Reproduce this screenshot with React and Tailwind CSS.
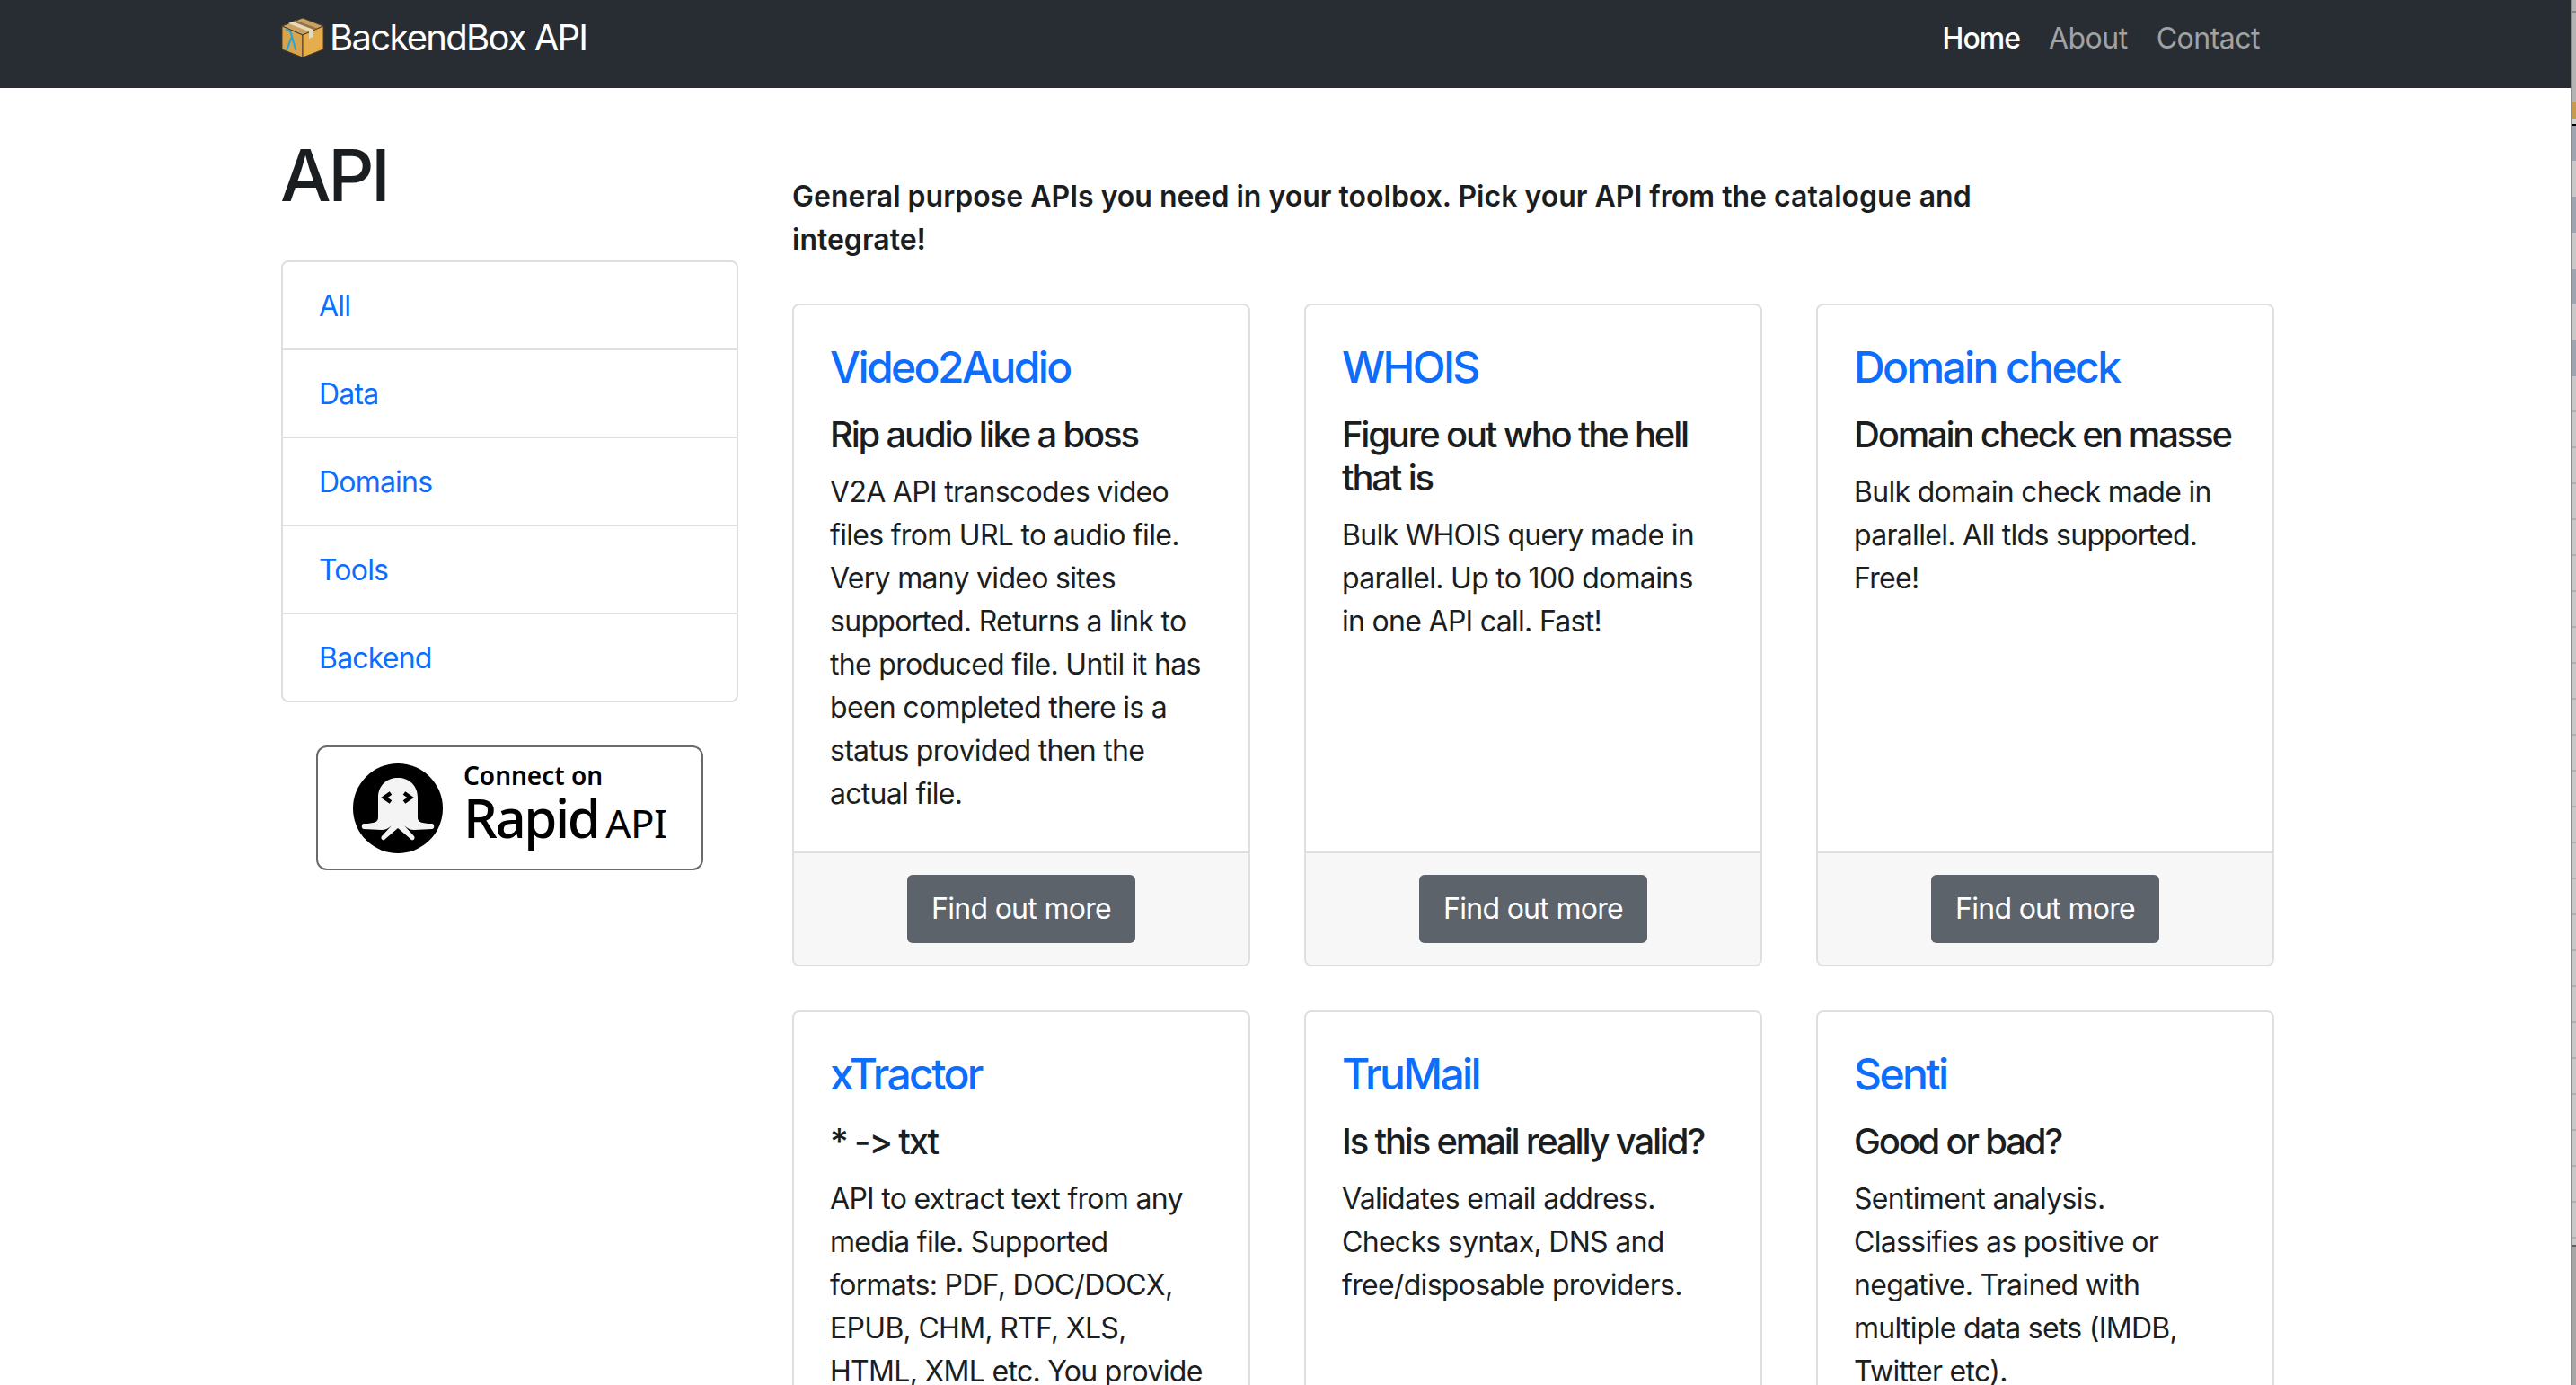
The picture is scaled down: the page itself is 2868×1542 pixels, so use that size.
const apis = [
  { t: "Video2Audio", s: "Rip audio like a boss", d: "V2A API transcodes video files from URL to audio file. Very many video sites supported. Returns a link to the produced file. Until it has been completed there is a status provided then the actual file." },
  { t: "WHOIS", s: "Figure out who the hell that is", d: "Bulk WHOIS query made in parallel. Up to 100 domains in one API call. Fast!" },
  { t: "Domain check", s: "Domain check en masse", d: "Bulk domain check made in parallel. All tlds supported. Free!" },
  { t: "xTractor", s: "* -> txt", d: "API to extract text from any media file. Supported formats: PDF, DOC/DOCX, EPUB, CHM, RTF, XLS, HTML, XML etc. You provide" },
  { t: "TruMail", s: "Is this email really valid?", d: "Validates email address. Checks syntax, DNS and free/disposable providers." },
  { t: "Senti", s: "Good or bad?", d: "Sentiment analysis. Classifies as positive or negative. Trained with multiple data sets (IMDB, Twitter etc)." },
];
const cats = ["All", "Data", "Domains", "Tools", "Backend"];
const strip = [
  ["h-[12px]", "bg-[#b3b3b3]"], ["h-[2px]", "bg-[#858585]"], ["h-[100px]", "bg-[#b3b3b3]"],
  ["h-[18px]", "bg-[#c79a4e]"], ["h-[6px]", "bg-[#d0d0d0]"], ["h-[2px]", "bg-black"],
  ["h-[39px]", "bg-[#9ea4b0]"], ["h-[40px]", "bg-[#c8c8c8]"], ["h-[40px]", "bg-[#9ea4b0]"], ["h-[40px]", "bg-[#c8c8c8]"],
  ["h-[40px]", "bg-[#9ea4b0]"], ["h-[40px]", "bg-[#c8c8c8]"], ["h-[40px]", "bg-[#9ea4b0]"],
  ...Array.from({ length: 24 }, () => ["h-[40px] border-b-2 border-[#b0b0b0]", "bg-[#c8c8c8]"]),
  ["h-[7px]", "bg-[#c8c8c8]"], ["h-[2px]", "bg-[#5f5f5f]"], ["h-[155px]", "bg-[#a6a6a6]"],
];

function BoxLogo() {
  return (
    <svg width="48" height="46" viewBox="0 0 48 46" className="shrink-0 -mt-[2px]">
      <path d="M24 1 L47 10 L24 20 L1 10 Z" fill="#c9a163" stroke="#4a3a26" strokeWidth="1" />
      <path d="M1 10 L24 20 L24 45 L1 36 Z" fill="#d9a54c" stroke="#4a3a26" strokeWidth="1" />
      <path d="M47 10 L24 20 L24 45 L47 36 Z" fill="#e5ad4b" stroke="#4a3a26" strokeWidth="1" />
      <path d="M13 5 L36 14 L36 22 L31 24 L31 16 L8 7 Z" fill="#e8d9b8" />
      <path d="M16 3.5 L40 12.5 L37 14 L13 5 Z" fill="#8d7350" />
      <path d="M5 14 C10 14 11 17 12 22 L16.5 37 M11.5 23 L6 37" fill="none" stroke="#2aa5d8" strokeWidth="2.2" />
    </svg>
  );
}

function RapidBadge() {
  return (
    <div className="mt-[48px] ml-[39px] h-[139px] w-[431px] rounded-[12px] border-2 border-[#6b6b6b] bg-white flex items-center pl-[39px]">
      <svg width="100" height="100" viewBox="0 0 100 100" className="shrink-0">
        <circle cx="50" cy="50" r="50" fill="#000" />
        <path d="M28 60 V38 C28 24 38 16 50 16 C62 16 72 24 72 38 V60 C72 65 76 67 88 67 C91 67 91 73 88 73 L68 74 C64 74 60 72 57 69 L68 81 C70 84 66 87 64 84 L50 72 L36 84 C34 87 30 84 32 81 L43 69 C40 72 36 74 32 74 L12 73 C9 73 9 67 12 67 C24 67 28 65 28 60 Z" fill="#f4f4f4" />
        <path d="M42 33 L35 38 L42 43 M57 33 L64 38 L57 43" fill="none" stroke="#000" strokeWidth="4.5" />
      </svg>
      <div className="ml-[23px] flex flex-col font-['Noto_Sans',sans-serif] text-black -mt-[7px]">
        <span className="text-[28px] leading-[34px] font-semibold">Connect on</span>
        <span className="flex items-baseline leading-[60px]">
          <span className="text-[60px] font-medium tracking-[-2.5px]">Rapid</span>
          <span className="ml-[8px] text-[44px] font-normal tracking-[-0.5px]">API</span>
        </span>
      </div>
    </div>
  );
}

function Card({ a }) {
  return (
    <div className="flex flex-col rounded-[8px] border-2 border-[#dfdfdf] bg-white overflow-hidden">
      <div className="flex-1 px-[40px] pt-[40px] pb-[24px]">
        <div className="text-[48px] leading-[58px] font-medium text-[#0d6efd] tracking-[-2.6px]">{a.t}</div>
        <div className="mt-[22px] text-[40px] leading-[48px] font-medium text-[#1b1e21] tracking-[-2.2px]">{a.s}</div>
        <p className="mt-[16px] pr-[6px] text-[32px] leading-[48px] text-[#1b1e21] tracking-[-0.7px]">{a.d}</p>
      </div>
      <div className="h-[126px] shrink-0 border-t-2 border-[#dfdfdf] bg-[#f7f7f7] flex items-center justify-center">
        <div className="h-[76px] w-[254px] rounded-[6px] bg-[#5c636a] text-white text-[32px] tracking-[-0.7px] flex items-center justify-center">Find out more</div>
      </div>
    </div>
  );
}

export default function App() {
  return (
    <div className="flex h-[1542px] w-[2868px] overflow-hidden bg-white font-['Inter',sans-serif]">
      <div className="w-[2862px] shrink-0">
        <header className="h-[98px] bg-[#282d33] flex items-center pb-[12px] pl-[313px] pr-[346px] justify-between">
          <div className="flex items-center">
            <BoxLogo />
            <span className="ml-[6px] -mt-[2px] text-[40px] text-white tracking-[-1.7px]">BackendBox API</span>
          </div>
          <nav className="flex gap-[32px] text-[32px] tracking-[-0.5px]">
            <span className="font-medium text-white tracking-[-1px]">Home</span>
            <span className="text-[#a0a2a4]">About</span>
            <span className="text-[#a0a2a4]">Contact</span>
          </nav>
        </header>
        <div className="flex pl-[313px] pr-[330px] gap-[60px]">
          <aside className="w-[509px] shrink-0">
            <h1 className="mt-[49px] text-[80px] leading-[96px] font-medium text-[#1b1e21] tracking-[-3.5px] -ml-[1px]">API</h1>
            <ul className="mt-[47px] rounded-[8px] border-2 border-[#dfdfdf]">
              {cats.map((c, i) => (
                <li key={c} className={`${i < 4 ? "h-[98px] border-b-2 border-[#dfdfdf]" : "h-[96px]"} flex items-center pl-[40px] pt-[2px] text-[32px] text-[#0d6efd] tracking-[-0.8px]`}>{c}</li>
              ))}
            </ul>
            <RapidBadge />
          </aside>
          <main className="flex-1">
            <p className="mt-[97px] text-[32px] leading-[48px] font-semibold text-[#1b1e21] w-[1400px]">General purpose APIs you need in your toolbox. Pick your API from the catalogue and integrate!</p>
            <div className="mt-[47px] grid grid-cols-3 gap-x-[60px] gap-y-[49px] grid-rows-[738px_738px]">
              {apis.map((a) => <Card key={a.t} a={a} />)}
            </div>
          </main>
        </div>
      </div>
      <div className="w-[6px] shrink-0 border-l-2 border-[#8e8e8e] flex flex-col">
        {strip.map(([h, c], i) => <div key={i} className={`${h} ${c} shrink-0`} />)}
      </div>
    </div>
  );
}
